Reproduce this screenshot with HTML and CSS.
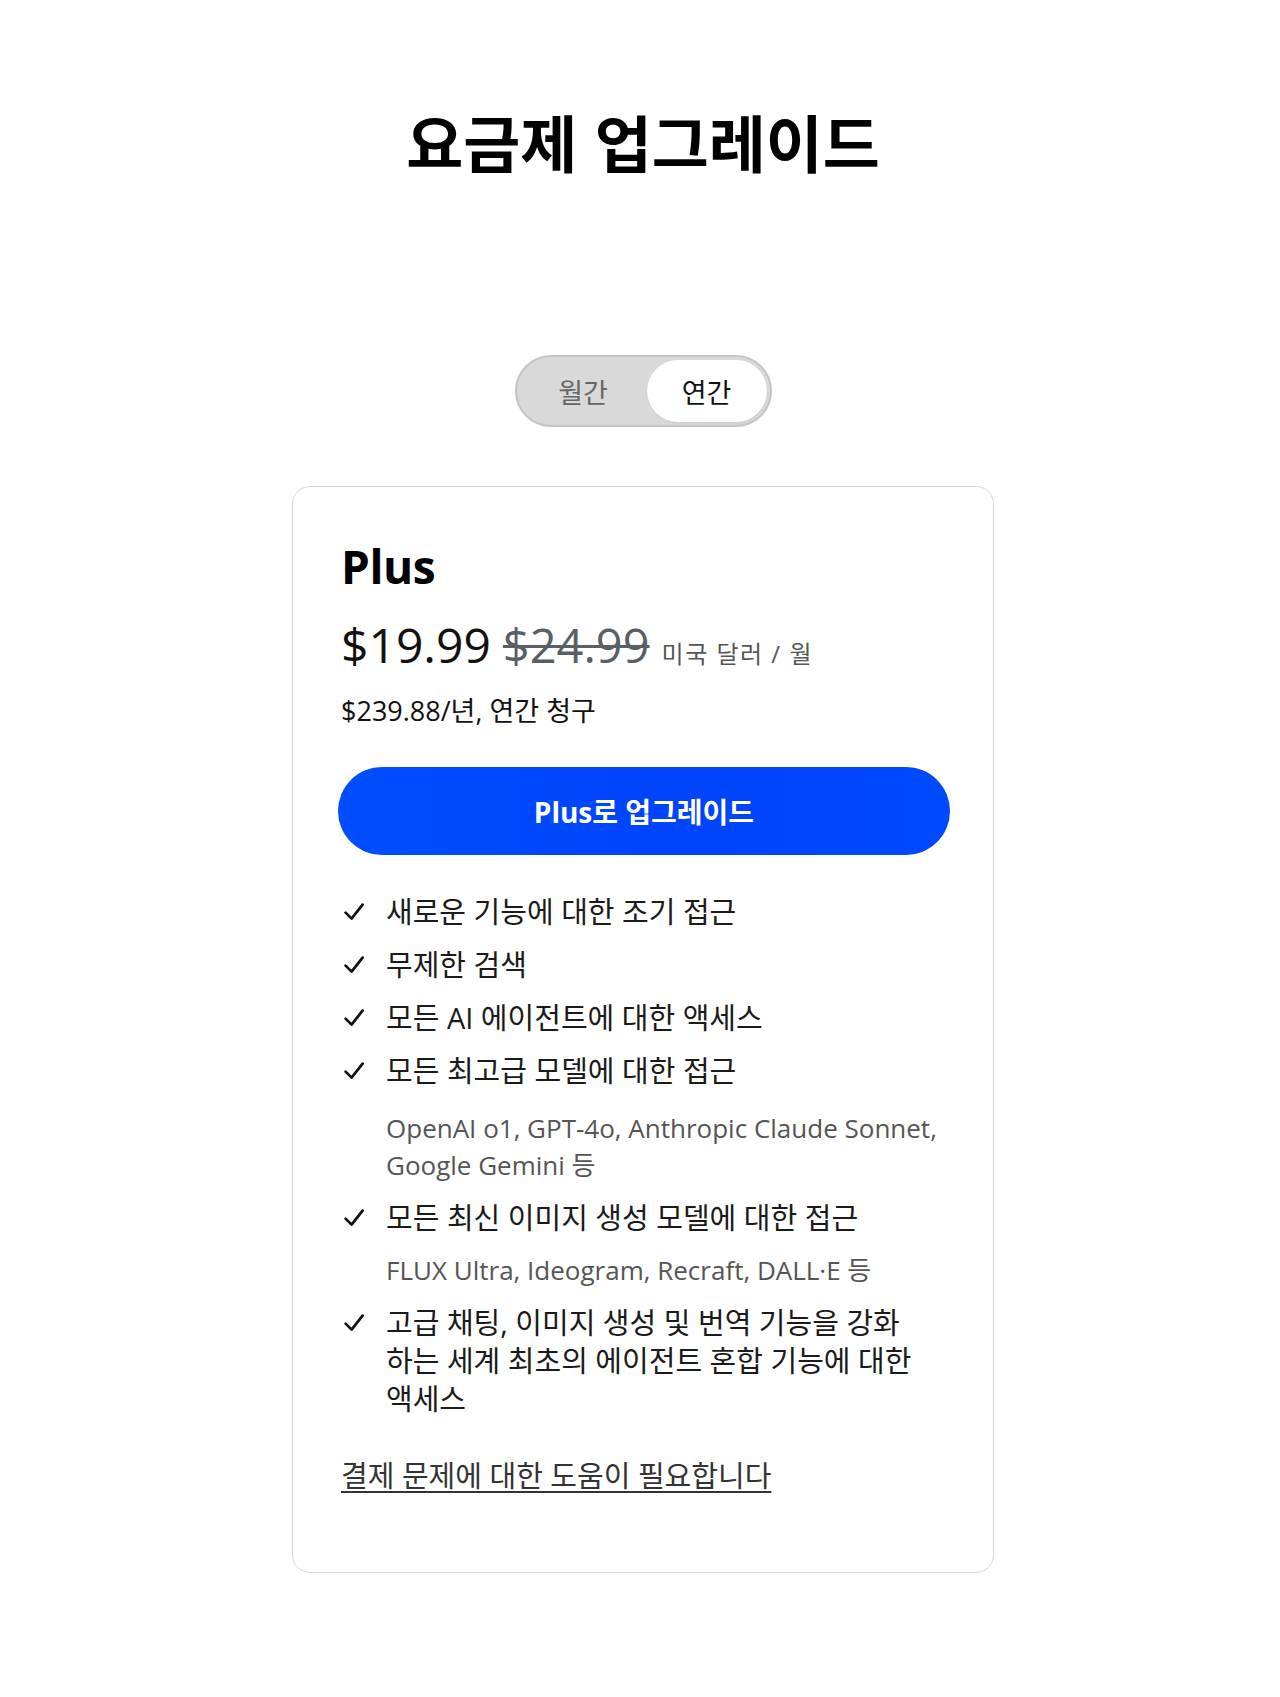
FILE: index.html
```html
<!DOCTYPE html>
<html lang="ko">
<head>
    <meta charset="UTF-8">
    <title>요금제 업그레이드</title>
    <link rel="stylesheet" href="styles.css">
</head>
<body>
    <div class="page">
        <!-- Title -->
        <h1 class="page-title">요금제 업그레이드</h1>

        <!-- Billing period toggle -->
        <div class="period-toggle">
            <span class="period-option">월간</span>
            <span class="period-option active">연간</span>
        </div>

        <!-- Plan card -->
        <div class="plan-card">
            <h2 class="plan-name">Plus</h2>
            <div class="price-row">
                <span class="price-now">$19.99</span>
                <span class="price-old">$24.99</span>
                <span class="price-unit">미국 달러 / 월</span>
            </div>
            <div class="price-annual">$239.88/년, 연간 청구</div>

            <button class="upgrade-button">Plus로 업그레이드</button>

            <ul class="feature-list">
                <li class="feature">
                    <span class="check"><svg viewBox="0 0 20 18" width="20" height="18"><path d="M1.6 9.6 L7.6 15.6 L18.6 1.6" fill="none" stroke="currentColor" stroke-width="2.7" stroke-linecap="round" stroke-linejoin="round"/></svg></span>
                    <span class="feature-text">새로운 기능에 대한 조기 접근</span>
                </li>
                <li class="feature">
                    <span class="check"><svg viewBox="0 0 20 18" width="20" height="18"><path d="M1.6 9.6 L7.6 15.6 L18.6 1.6" fill="none" stroke="currentColor" stroke-width="2.7" stroke-linecap="round" stroke-linejoin="round"/></svg></span>
                    <span class="feature-text">무제한 검색</span>
                </li>
                <li class="feature">
                    <span class="check"><svg viewBox="0 0 20 18" width="20" height="18"><path d="M1.6 9.6 L7.6 15.6 L18.6 1.6" fill="none" stroke="currentColor" stroke-width="2.7" stroke-linecap="round" stroke-linejoin="round"/></svg></span>
                    <span class="feature-text">모든 AI 에이전트에 대한 액세스</span>
                </li>
                <li class="feature">
                    <span class="check"><svg viewBox="0 0 20 18" width="20" height="18"><path d="M1.6 9.6 L7.6 15.6 L18.6 1.6" fill="none" stroke="currentColor" stroke-width="2.7" stroke-linecap="round" stroke-linejoin="round"/></svg></span>
                    <span class="feature-text">모든 최고급 모델에 대한 접근</span>
                </li>
                <li class="feature-note first-note">OpenAI o1, GPT-4o, Anthropic Claude Sonnet,<br>Google Gemini 등</li>
                <li class="feature">
                    <span class="check"><svg viewBox="0 0 20 18" width="20" height="18"><path d="M1.6 9.6 L7.6 15.6 L18.6 1.6" fill="none" stroke="currentColor" stroke-width="2.7" stroke-linecap="round" stroke-linejoin="round"/></svg></span>
                    <span class="feature-text">모든 최신 이미지 생성 모델에 대한 접근</span>
                </li>
                <li class="feature-note">FLUX Ultra, Ideogram, Recraft, DALL·E 등</li>
                <li class="feature">
                    <span class="check"><svg viewBox="0 0 20 18" width="20" height="18"><path d="M1.6 9.6 L7.6 15.6 L18.6 1.6" fill="none" stroke="currentColor" stroke-width="2.7" stroke-linecap="round" stroke-linejoin="round"/></svg></span>
                    <span class="feature-text">고급 채팅, 이미지 생성 및 번역 기능을 강화<br>하는 세계 최초의 에이전트 혼합 기능에 대한<br>액세스</span>
                </li>
            </ul>

            <a class="help-link" href="#">결제 문제에 대한 도움이 필요합니다</a>
        </div>
    </div>
</body>
</html>
```

FILE: styles.css
```css
body {
    margin: 0;
    padding: 0;
    background-color: #fff;
    color: #1a1a1a;
    font-family: "Open Sans", "Noto Sans CJK KR", sans-serif;
}
.page {
    display: flex;
    flex-direction: column;
    align-items: center;
    padding: 105px 0 120px 6px;
}

/* --- Title --- */
.page-title {
    margin: 0;
    font-family: "Noto Sans CJK KR", sans-serif;
    font-size: 62px;
    font-weight: 700;
    line-height: 72px;
    color: #000;
}

/* --- Period toggle --- */
.period-toggle {
    margin-top: 178px;
    width: 257px;
    height: 72px;
    box-sizing: border-box;
    padding: 3px;
    display: flex;
    align-items: stretch;
    border: 2px solid #c4c4c4;
    border-radius: 36px;
    background-color: #d9d9d9;
}
.period-option {
    flex: 1;
    display: flex;
    align-items: center;
    justify-content: center;
    font-size: 27px;
    color: #666;
}
.period-option.active {
    flex: 0 0 120px;
    border-radius: 31px;
    background-color: #fff;
    color: #111;
    box-shadow: 0 1px 2px rgba(0, 0, 0, .08);
}

/* --- Plan card --- */
.plan-card {
    margin-top: 59px;
    width: 702px;
    box-sizing: border-box;
    padding: 52px 48px 77px;
    border: 1px solid #d8d8d8;
    border-radius: 18px;
    display: flex;
    flex-direction: column;
    align-items: flex-start;
}
.plan-name {
    margin: 0;
    font-size: 46px;
    font-weight: 700;
    line-height: 55px;
    letter-spacing: -0.5px;
    color: #000;
}
.price-row {
    margin-top: 22px;
    display: flex;
    align-items: baseline;
    gap: 12px;
    line-height: 58px;
}
.price-now {
    font-size: 48px;
    color: #111;
}
.price-old {
    font-size: 47px;
    color: #5a5f66;
    text-decoration: line-through;
    text-decoration-thickness: 3px;
}
.price-unit {
    font-size: 24px;
    letter-spacing: 1.5px;
    color: #555;
}
.price-annual {
    margin-top: 11px;
    font-size: 27px;
    line-height: 34px;
    color: #111;
}

/* --- Upgrade button --- */
.upgrade-button {
    margin: 39px -3px 0 -3px;
    width: calc(100% + 8px);
    height: 88px;
    border: none;
    border-radius: 44px;
    background: linear-gradient(90deg, #004dff, #0044fb 55%, #0049ff);
    color: #fff;
    font-family: inherit;
    font-size: 28px;
    font-weight: 700;
    cursor: pointer;
}

/* --- Features --- */
.feature-list {
    margin: 38px 0 0;
    padding: 0;
    list-style: none;
    display: flex;
    flex-direction: column;
    gap: 15px;
}
.feature {
    display: flex;
    align-items: flex-start;
    font-size: 29px;
    line-height: 38px;
    color: #1a1a1a;
}
.check {
    flex: 0 0 45px;
    height: 38px;
    padding-left: 3px;
    box-sizing: border-box;
    display: flex;
    align-items: center;
    color: #111;
}
.feature-note {
    padding-left: 45px;
    font-size: 26px;
    line-height: 37px;
    white-space: nowrap;
    color: #555;
}
.feature-note.first-note {
    margin-top: 5px;
}

/* --- Help link --- */
.help-link {
    margin-top: 39px;
    font-size: 29px;
    line-height: 38px;
    color: #333;
    text-decoration: underline;
    text-underline-offset: 4px;
}
```
